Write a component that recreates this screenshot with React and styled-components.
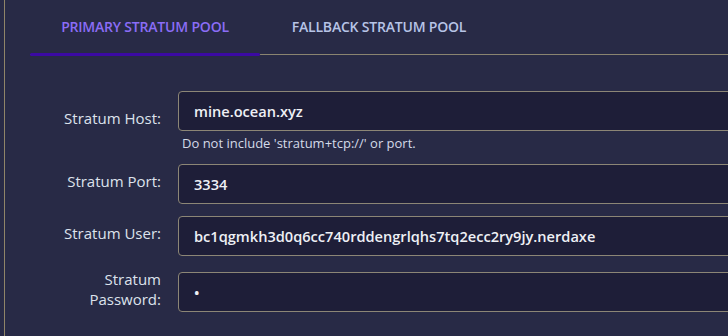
import React, { useState } from 'react';
import styled, { createGlobalStyle } from 'styled-components';

const GlobalStyle = createGlobalStyle`
  html, body {
    margin: 0;
    padding: 0;
    background: #282a46;
    overflow: hidden;
  }
  body {
    font-family: "Open Sans", "Noto Sans", sans-serif;
  }
`;

const Page = styled.div`
  height: 336px;
  padding-left: 4px;
`;

const Panel = styled.div`
  height: 100%;
  border-left: 1px solid #8f8468;
  padding-left: 25px;
  overflow: hidden;
`;

const TabList = styled.div`
  display: flex;
  height: 54px;
  border-bottom: 1px solid #8a8470;
`;

const Tab = styled.button`
  position: relative;
  flex: none;
  box-sizing: border-box;
  background: none;
  border: 0;
  padding: 0 0 2px;
  width: ${p => p.$width}px;
  white-space: nowrap;
  font-family: inherit;
  font-size: 14px;
  font-weight: 600;
  letter-spacing: -0.2px;
  color: ${p => (p.$active ? '#8b6df6' : '#b7c4e6')};
  cursor: pointer;

  &::after {
    content: '';
    display: ${p => (p.$active ? 'block' : 'none')};
    position: absolute;
    left: 0;
    right: 0;
    bottom: -2px;
    height: 3px;
    border-radius: 2px;
    background: #3b0aa3;
  }
`;

const Form = styled.div`
  padding-top: 36px;
  display: flex;
  flex-direction: column;
`;

const Row = styled.div`
  display: grid;
  grid-template-columns: 131px 600px;
  column-gap: 17px;
  align-items: center;
  margin-bottom: ${p => p.$gap}px;
`;

const Label = styled.label`
  margin-top: -7px;
  padding-left: 20px;
  text-align: right;
  font-size: 15px;
  line-height: 20px;
  color: #dde2ec;
`;

const Field = styled.div`
  display: flex;
  flex-direction: column;
`;

const Input = styled.input`
  box-sizing: border-box;
  height: 40px;
  width: 100%;
  background: #1e1e38;
  border: 1px solid #8c8676;
  border-radius: 4px;
  padding: 0 15px;
  font-family: inherit;
  font-size: 14.6px;
  font-weight: 600;
  color: #eef0f5;
  outline: none;
`;

const Help = styled.small`
  font-size: 13px;
  line-height: 17px;
  margin-top: 4px;
  padding-left: 4px;
  color: #d4dae8;
`;

const fields = [
  { label: 'Stratum Host:', value: 'mine.ocean.xyz', help: "Do not include 'stratum+tcp://' or port.", gap: 12 },
  { label: 'Stratum Port:', value: '3334', gap: 12 },
  { label: 'Stratum User:', value: 'bc1qgmkh3d0q6cc740rddengrlqhs7tq2ecc2ry9jy.nerdaxe', gap: 16 },
  { label: 'Stratum Password:', value: '*', type: 'password', gap: 0 },
];

export default function App() {
  const [tab, setTab] = useState(0);
  return (
    <>
      <GlobalStyle />
      <Page>
        <Panel>
          <TabList>
            <Tab $active={tab === 0} $width={230} onClick={() => setTab(0)}>
              PRIMARY STRATUM POOL
            </Tab>
            <Tab $active={tab === 1} $width={238} onClick={() => setTab(1)}>
              FALLBACK STRATUM POOL
            </Tab>
          </TabList>
          <Form>
            {fields.map(f => (
              <Row key={f.label} $gap={f.gap}>
                <Label>{f.label}</Label>
                <Field>
                  <Input type={f.type || 'text'} defaultValue={f.value} readOnly />
                  {f.help && <Help>{f.help}</Help>}
                </Field>
              </Row>
            ))}
          </Form>
        </Panel>
      </Page>
    </>
  );
}
